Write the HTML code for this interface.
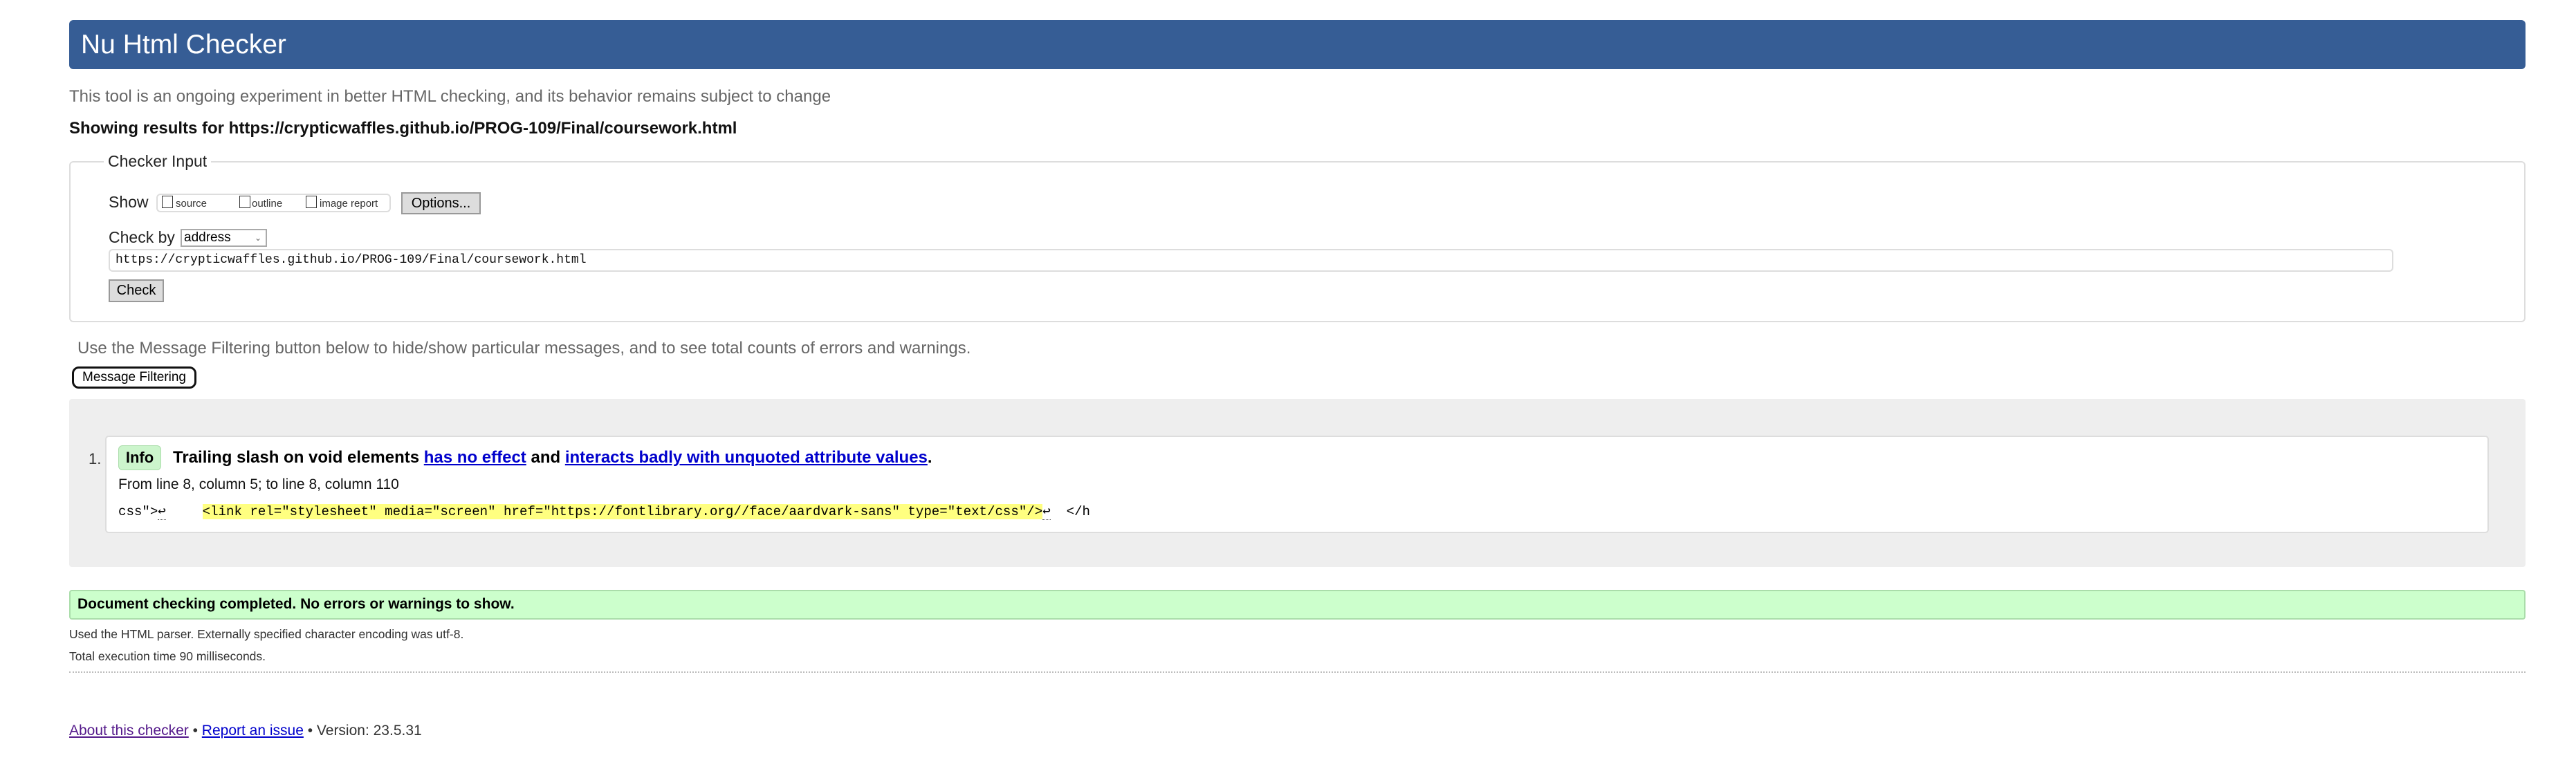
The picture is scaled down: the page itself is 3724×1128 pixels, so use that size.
<!DOCTYPE html>
<html><head><meta charset="utf-8"><style>
body{margin:0;width:3724px;height:1128px;background:#fff;font-family:"Liberation Sans",Arial,sans-serif;position:relative;overflow:hidden;color:#000}
.a{position:absolute;white-space:nowrap}
#hd{left:100px;top:29px;width:3551px;height:71px;background:#365d95;border-radius:6px}
#hd span{position:absolute;left:17px;top:14px;color:#fff;font-size:39px}
.btn{position:absolute;background:#ddd;border:2px solid #999;font-size:20px;text-align:center;box-sizing:border-box}
.mono{font-family:"Liberation Mono",monospace}
a{color:#00c;text-decoration:underline}
</style></head><body>
<div class="a" id="hd"><span>Nu Html Checker</span></div>
<div class="a" style="left:100px;top:126px;font-size:24px;color:#666">This tool is an ongoing experiment in better HTML checking, and its behavior remains subject to change</div>
<div class="a" style="left:100px;top:172px;font-size:24px;font-weight:bold;color:#111">Showing results for https://crypticwaffles.github.io/PROG-109/Final/coursework.html</div>
<div class="a" style="left:100px;top:233px;width:3551px;height:233px;border:2px solid #ddd;border-radius:6px;box-sizing:border-box"></div>
<div class="a" style="left:150px;top:220px;background:#fff;padding:0 6px;font-size:23px;color:#222">Checker Input</div>
<div class="a" style="left:157px;top:279px;font-size:23px;color:#222">Show</div>
<div class="a" style="left:226px;top:280px;width:339px;height:27px;border:2px solid #ddd;border-radius:6px;box-sizing:border-box;font-size:15px;color:#333">
<span class="a" style="left:6px;top:1px;width:14px;height:16px;border:1.5px solid #333"></span><span class="a" style="left:26px;top:4px">source</span>
<span class="a" style="left:118px;top:1px;width:14px;height:16px;border:1.5px solid #333"></span><span class="a" style="left:136px;top:4px">outline</span>
<span class="a" style="left:214px;top:1px;width:14px;height:16px;border:1.5px solid #333"></span><span class="a" style="left:234px;top:4px">image report</span></div>
<div class="btn" style="left:580px;top:278px;width:115px;height:32px;line-height:28px">Options...</div>
<div class="a" style="left:157px;top:330px;font-size:23px;color:#222">Check by</div>
<div class="a" style="left:261px;top:331px;width:125px;height:26px;border:2px solid #aaa;box-sizing:border-box;font-size:19px;padding-left:3px;line-height:22px">address<span style="position:absolute;right:6px;font-size:12px;color:#666">&#8964;</span></div>
<div class="a mono" style="left:157px;top:360px;width:3303px;height:33px;border:2px solid #ddd;border-radius:6px;box-sizing:border-box;font-size:18px;line-height:29px;padding-left:8px;color:#111">https://crypticwaffles.github.io/PROG-109/Final/coursework.html</div>
<div class="btn" style="left:157px;top:404px;width:80px;height:33px;line-height:29px">Check</div>
<div class="a" style="left:112px;top:490px;font-size:24px;color:#666">Use the Message Filtering button below to hide/show particular messages, and to see total counts of errors and warnings.</div>
<div class="a" style="left:104px;top:530px;width:180px;height:32px;border:3px solid #111;border-radius:10px;box-sizing:border-box;font-size:19px;text-align:center;line-height:26px">Message Filtering</div>
<div class="a" style="left:100px;top:577px;width:3551px;height:243px;background:#eee;border-radius:4px"></div>
<div class="a" style="left:152px;top:630px;width:3446px;height:141px;background:#fff;border:2px solid #ddd;border-radius:5px;box-sizing:border-box"></div>
<div class="a" style="left:128px;top:651px;font-size:22px;color:#333">1.</div>
<div class="a" style="left:171px;top:644px;width:62px;height:36px;background:#ccf5cc;border:1.5px solid #aaddaa;border-radius:6px;box-sizing:border-box;font-size:22px;font-weight:bold;text-align:center;line-height:33px">Info</div>
<div class="a" style="left:250px;top:648px;font-size:24px;font-weight:bold">Trailing slash on void elements <a href="#">has no effect</a> and <a href="#">interacts badly with unquoted attribute values</a>.</div>
<div class="a" style="left:171px;top:689px;font-size:21px;color:#111">From line 8, column 5; to line 8, column 110</div>
<div class="a mono" style="left:171px;top:726px;font-size:19.1px;line-height:28px">css"&gt;<span style="border-bottom:1px dotted #555">&#8617;</span>&nbsp;&nbsp;&nbsp;&nbsp;<span style="background:#ffff80;margin-left:7px">&lt;link rel="stylesheet" media="screen" href="https://fontlibrary.org//face/aardvark-sans" type="text/css"/&gt;</span><span style="border-bottom:1px dotted #555">&#8617;</span>&nbsp;&nbsp;&lt;/h</div>
<div class="a" style="left:100px;top:853px;width:3551px;height:43px;background:#ccffcc;border:2px solid #aaddaa;border-radius:4px;box-sizing:border-box"></div>
<div class="a" style="left:112px;top:862px;font-size:21px;font-weight:bold">Document checking completed. No errors or warnings to show.</div>
<div class="a" style="left:100px;top:907px;font-size:17.5px;color:#333">Used the HTML parser. Externally specified character encoding was utf-8.</div>
<div class="a" style="left:100px;top:939px;font-size:17.5px;color:#333">Total execution time 90 milliseconds.</div>
<div class="a" style="left:100px;top:971px;width:3551px;border-top:2px dotted #bbb"></div>
<div class="a" style="left:100px;top:1045px;font-size:21px;color:#333"><a href="#" style="color:#551a8b">About this checker</a> • <a href="#">Report an issue</a> • Version: 23.5.31</div>
</body></html>
